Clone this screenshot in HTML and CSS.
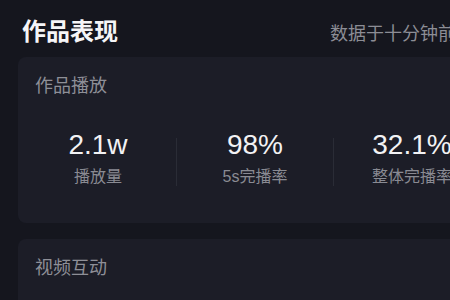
FILE: index.html
```html
<!DOCTYPE html>
<html>
    <head>
        <title>作品表现</title>
        <link rel="stylesheet" href="styles.css">
    </head>
    <body>
        <div class="screen">
            <div class="header">
                <h1>作品表现</h1>
                <span class="updated">数据于十分钟前更新</span>
            </div>

            <div class="card">
                <div class="card-title">作品播放</div>
                <div class="stats">
                    <div class="stat">
                        <div class="value">2.1w</div>
                        <div class="label">播放量</div>
                    </div>
                    <div class="divider"></div>
                    <div class="stat">
                        <div class="value">98%</div>
                        <div class="label">5s完播率</div>
                    </div>
                    <div class="divider"></div>
                    <div class="stat">
                        <div class="value">32.1%</div>
                        <div class="label">整体完播率</div>
                    </div>
                </div>
            </div>

            <div class="card">
                <div class="card-title">视频互动</div>
            </div>
        </div>
    </body>
</html>
```

FILE: styles.css
```css
html, body{
    margin: 0;
    background-color: #15161e;
    overflow: hidden;
}
body{
    font-family: "Liberation Sans", "Noto Sans CJK SC", sans-serif;
    color: #f2f2f4;
}
.screen{
    width: 474px;
    padding: 16px 0 0 18px;
}
.header{
    display: flex;
    justify-content: space-between;
    align-items: baseline;
    padding-left: 4px;
    margin-bottom: 9px;
}
h1{
    margin: 0;
    font-size: 24px;
    line-height: 32px;
    font-weight: bold;
    color: #f5f5f7;
}
.updated{
    font-size: 18px;
    color: #8c8d95;
    white-space: nowrap;
}
.card{
    background-color: #1c1d27;
    border-radius: 8px;
    padding: 17px 0 35px 0;
    margin-bottom: 16px;
}
.card-title{
    padding-left: 17px;
    font-size: 18px;
    line-height: 24px;
    color: #8e8f97;
}
.stats{
    display: grid;
    grid-template-columns: 156px 1px 156px 1px 156px;
    align-items: center;
    padding-left: 2px;
    margin-top: 30px;
}
.stat{
    text-align: center;
    white-space: nowrap;
}
.value{
    font-size: 28px;
    line-height: 34px;
}
.label{
    margin-top: 4px;
    font-size: 16px;
    line-height: 22px;
    color: #8a8b93;
}
.divider{
    height: 48px;
    background-color: #2a2c36;
    margin-top: 8px;
}
```
